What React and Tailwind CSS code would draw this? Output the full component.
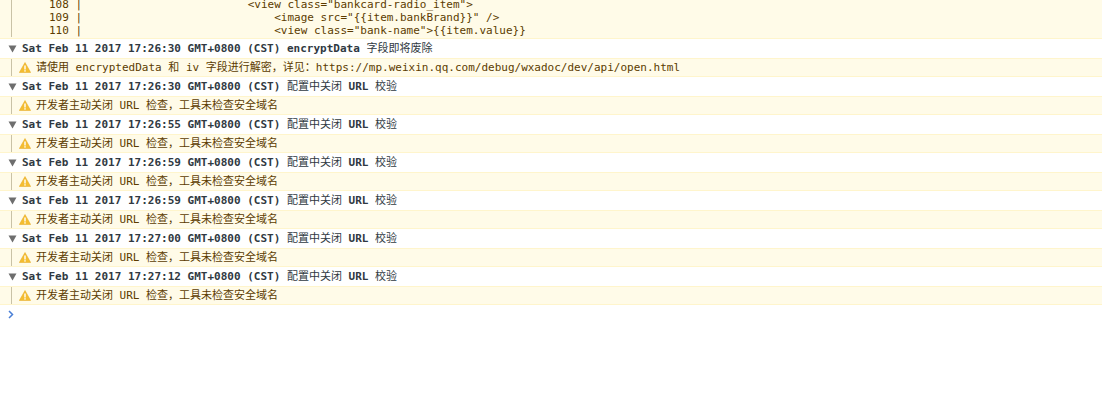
import React from 'react';

const mono = 'font-["DejaVu_Sans_Mono","Noto_Sans_CJK_SC",monospace]';

const logs = [
  { time: 'Sat Feb 11 2017 17:26:30 GMT+0800 (CST)', title: 'encryptData 字段即将废除', warn: '请使用 encryptedData 和 iv 字段进行解密，详见：https://mp.weixin.qq.com/debug/wxadoc/dev/api/open.html' },
  { time: 'Sat Feb 11 2017 17:26:30 GMT+0800 (CST)', title: '配置中关闭 URL 校验', warn: '开发者主动关闭 URL 检查，工具未检查安全域名' },
  { time: 'Sat Feb 11 2017 17:26:55 GMT+0800 (CST)', title: '配置中关闭 URL 校验', warn: '开发者主动关闭 URL 检查，工具未检查安全域名' },
  { time: 'Sat Feb 11 2017 17:26:59 GMT+0800 (CST)', title: '配置中关闭 URL 校验', warn: '开发者主动关闭 URL 检查，工具未检查安全域名' },
  { time: 'Sat Feb 11 2017 17:26:59 GMT+0800 (CST)', title: '配置中关闭 URL 校验', warn: '开发者主动关闭 URL 检查，工具未检查安全域名' },
  { time: 'Sat Feb 11 2017 17:27:00 GMT+0800 (CST)', title: '配置中关闭 URL 校验', warn: '开发者主动关闭 URL 检查，工具未检查安全域名' },
  { time: 'Sat Feb 11 2017 17:27:12 GMT+0800 (CST)', title: '配置中关闭 URL 校验', warn: '开发者主动关闭 URL 检查，工具未检查安全域名' },
];

const codeLines = [
  '108 |                         <view class="bankcard-radio_item">',
  '109 |                             <image src="{{item.bankBrand}}" />',
  '110 |                             <view class="bank-name">{{item.value}}',
];

function WarnIcon() {
  return (
    <svg width="12" height="11" viewBox="0 0 12 11" className="shrink-0">
      <path d="M6 0.5 L11.7 10.5 L0.3 10.5 Z" fill="#f4bd30" stroke="#e5a823" strokeWidth="0.5" strokeLinejoin="round" />
      <rect x="5.3" y="3.5" width="1.4" height="4" fill="#fff" />
      <rect x="5.3" y="8.2" width="1.4" height="1.4" fill="#fff" />
    </svg>
  );
}

function Triangle() {
  return (
    <svg width="9" height="8" viewBox="0 0 9 8" className="shrink-0">
      <path d="M0.5 0.5 L8.5 0.5 L4.5 7.5 Z" fill="#6e6e6e" />
    </svg>
  );
}

// 标题里的英文部分是粗体
function renderTitle(title) {
  if (title.startsWith('encryptData')) {
    return (
      <>
        <span className="font-bold">encryptData</span> 字段即将废除
      </>
    );
  }
  return (
    <>
      配置中关闭 <span className="font-bold">URL</span> 校验
    </>
  );
}

function LogGroup({ time, title, warn }) {
  return (
    <div>
      <div className="flex h-[19px] items-center pl-[8px]">
        <Triangle />
        <span className="ml-[5px] whitespace-pre font-bold text-[#303942]">{time} </span>
        <span className="whitespace-pre text-[#303942]">{renderTitle(title)}</span>
      </div>
      <div className="flex h-[19px] items-stretch border-y border-[#fff5cc] bg-[#fffbe8] pl-[11px]">
        <div className="flex items-center border-l border-[#c9c2a6] pl-[7px]">
          <WarnIcon />
          <span className="ml-[5px] whitespace-pre text-[#5c3b00]">{warn}</span>
        </div>
      </div>
    </div>
  );
}

export default function App() {
  return (
    <div className={`${mono} h-[412px] w-[1102px] overflow-hidden bg-white text-[11px] leading-[13px]`}>
      <div className="flex h-[39px] flex-col justify-end overflow-hidden border-b border-[#fff5cc] bg-[#fffbe8] pb-[1px] pl-[11px]">
        <div className="border-l border-[#c9c2a6] pl-[37px] text-[#5c3b00]">
          {codeLines.map((line) => (
            <div key={line} className="h-[13px] whitespace-pre">{line}</div>
          ))}
        </div>
      </div>

      {logs.map((log, i) => (
        <LogGroup key={i} {...log} />
      ))}

      <div className="flex h-[19px] items-center pl-[8px]">
        <svg width="6" height="9" viewBox="0 0 6 9">
          <path d="M1 1 L4.5 4.5 L1 8" fill="none" stroke="#4a7fd6" strokeWidth="1.5" />
        </svg>
      </div>
    </div>
  );
}
